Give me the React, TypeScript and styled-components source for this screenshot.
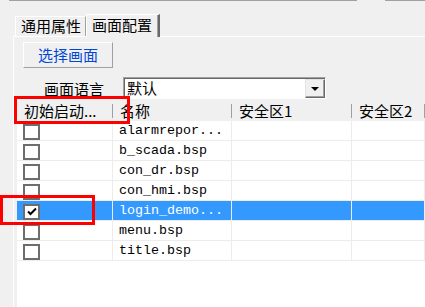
import styled, { createGlobalStyle } from "styled-components";

const GlobalStyle = createGlobalStyle`
  html, body {
    margin: 0;
    padding: 0;
    background: #f0f0f0;
  }
`;

const CJK = `"Noto Sans CJK SC", "Noto Sans", sans-serif`;
const MONO = `"Liberation Mono", "DejaVu Sans Mono", monospace`;

type Row = { name: string; checked?: boolean; selected?: boolean };

const rows: Row[] = [
  { name: "alarmrepor..." },
  { name: "b_scada.bsp" },
  { name: "con_dr.bsp" },
  { name: "con_hmi.bsp" },
  { name: "login_demo...", checked: true, selected: true },
  { name: "menu.bsp" },
  { name: "title.bsp" },
];

const Check = () => (
  <svg width="10" height="9" viewBox="0 0 10 9">
    <path d="M1 4.5 L3.5 7 L9 1.5" stroke="#000" strokeWidth="2" fill="none" />
  </svg>
);

const App = () => {
  return (
    <S.Page>
      <GlobalStyle />
      <S.TopEdge>
        <S.EdgeSegment $width={348} />
        <S.EdgeGap />
        <S.EdgeSegment />
      </S.TopEdge>

      <S.TabStrip>
        <S.Tab>通用属性</S.Tab>
        <S.Tab $active>画面配置</S.Tab>
      </S.TabStrip>

      <S.Panel>
        <S.Button>选择画面</S.Button>

        <S.LangRow>
          <S.Label>画面语言</S.Label>
          <S.Combo>
            <S.ComboText>默认</S.ComboText>
            <S.ComboArrow>
              <S.Triangle />
            </S.ComboArrow>
          </S.Combo>
        </S.LangRow>

        <S.Table>
          <S.HeaderRow>
            <S.HeadCell $width={96}>初始启动...</S.HeadCell>
            <S.HeadCell $width={119}>名称</S.HeadCell>
            <S.HeadCell $width={120}>安全区1</S.HeadCell>
            <S.HeadCell>安全区2</S.HeadCell>
          </S.HeaderRow>

          {rows.map((row) => (
            <S.BodyRow key={row.name} $selected={row.selected}>
              <S.Cell $width={96}>
                <S.CheckBox>{row.checked && <Check />}</S.CheckBox>
              </S.Cell>
              <S.Cell $width={119}>
                <S.Name $selected={row.selected}>{row.name}</S.Name>
              </S.Cell>
              <S.Cell $width={120} />
              <S.Cell />
            </S.BodyRow>
          ))}
        </S.Table>

        <S.Marker $top={96} $left={14} $width={116} $height={28} />
        <S.Marker $top={195} $left={0} $width={95} $height={30} />
      </S.Panel>
    </S.Page>
  );
};

export default App;

const S = {
  Page: styled.div`
    position: relative;
    width: 425px;
    height: 307px;
    overflow: hidden;
    background: #f0f0f0;
    display: flex;
    flex-direction: column;
    font-family: ${CJK};
    font-size: 15px;
    color: #000;
  `,

  TopEdge: styled.div`
    display: flex;
    height: 1px;
    margin-left: 9px;
  `,

  EdgeSegment: styled.div<{ $width?: number }>`
    background: #a0a0a0;
    ${({ $width }) => ($width ? `width: ${$width}px;` : "flex: 1;")}
  `,

  EdgeGap: styled.div`
    width: 28px;
  `,

  TabStrip: styled.div`
    display: flex;
    align-items: flex-end;
    height: 35px;
    padding-left: 15px;
    position: relative;
    z-index: 1;
  `,

  Tab: styled.div<{ $active?: boolean }>`
    box-sizing: border-box;
    height: ${({ $active }) => ($active ? 23 : 20)}px;
    margin-bottom: ${({ $active }) => ($active ? -1 : 0)}px;
    padding: ${({ $active }) => ($active ? "0 6px 0 5px" : "0 4px 0 5px")};
    line-height: ${({ $active }) => ($active ? 19 : 18)}px;
    background: #f0f0f0;
    border-top: 1px solid #fff;
    border-left: 1px solid #fff;
    border-right: ${({ $active }) => ($active ? "2px solid #696969" : "1px solid #a0a0a0")};
    box-shadow: ${({ $active }) => ($active ? "inset -1px 0 0 #a0a0a0" : "none")};
    white-space: nowrap;
  `,

  Panel: styled.div`
    position: relative;
    flex: 1;
    margin-left: 13px;
    border-top: 1px solid #fff;
    border-left: 1px solid #fff;
    display: flex;
    flex-direction: column;
  `,

  Button: styled.div`
    box-sizing: border-box;
    width: 90px;
    height: 26px;
    margin: 5px 0 0 9px;
    border-top: 1px solid #fff;
    border-left: 1px solid #fff;
    border-right: 1px solid #a0a0a0;
    border-bottom: 1px solid #a0a0a0;
    color: #0047d6;
    text-align: center;
    line-height: 23px;
  `,

  LangRow: styled.div`
    display: flex;
    align-items: center;
    margin-top: 9px;
    height: 22px;
  `,

  Label: styled.div`
    width: 79px;
    padding-left: 30px;
    line-height: 22px;
    margin-top: 2px;
  `,

  Combo: styled.div`
    box-sizing: border-box;
    display: flex;
    width: 203px;
    height: 22px;
    background: #fff;
    border-top: 1px solid #a0a0a0;
    border-left: 1px solid #a0a0a0;
    border-right: 1px solid #fff;
    border-bottom: 1px solid #fff;
    box-shadow: inset 1px 1px 0 #696969;
  `,

  ComboText: styled.div`
    flex: 1;
    padding-left: 3px;
    line-height: 19px;
  `,

  ComboArrow: styled.div`
    box-sizing: border-box;
    width: 20px;
    height: 19px;
    margin-top: 1px;
    background: #f0f0f0;
    border-top: 1px solid #e3e3e3;
    border-left: 1px solid #e3e3e3;
    border-right: 1px solid #696969;
    border-bottom: 1px solid #696969;
    box-shadow: inset -1px -1px 0 #a0a0a0;
    display: flex;
    align-items: center;
    justify-content: center;
  `,

  Triangle: styled.div`
    width: 0;
    height: 0;
    border-left: 4px solid transparent;
    border-right: 4px solid transparent;
    border-top: 4px solid #000;
  `,

  Table: styled.div`
    flex: 1;
    margin: 1px 0 0 3px;
    background: #fff;
    display: flex;
    flex-direction: column;
  `,

  HeaderRow: styled.div`
    display: flex;
    height: 21px;
    background: #f0f0f0;
  `,

  HeadCell: styled.div<{ $width?: number }>`
    box-sizing: border-box;
    ${({ $width }) => ($width ? `width: ${$width}px;` : "flex: 1;")}
    padding-left: 7px;
    line-height: 21px;
    white-space: nowrap;
    overflow: hidden;
    background: linear-gradient(#a0a0a0, #a0a0a0) right 4px / 1px 14px no-repeat;
  `,

  BodyRow: styled.div<{ $selected?: boolean }>`
    display: flex;
    height: 20px;
    box-sizing: border-box;
    border-bottom: 1px solid #ececec;
    background: ${({ $selected }) => ($selected ? "#3399ff" : "#fff")};
  `,

  Cell: styled.div<{ $width?: number }>`
    box-sizing: border-box;
    ${({ $width }) => ($width ? `width: ${$width}px;` : "flex: 1;")}
    border-right: 1px solid #ececec;
    display: flex;
    align-items: center;
    padding-left: 6px;
  `,

  CheckBox: styled.div`
    box-sizing: border-box;
    width: 17px;
    height: 16px;
    margin-top: 2px;
    border: 2px solid #6d6d6d;
    background: #fff;
    display: flex;
    align-items: center;
    justify-content: center;
  `,

  Name: styled.span<{ $selected?: boolean }>`
    font-family: ${MONO};
    font-size: 13.33px;
    color: ${({ $selected }) => ($selected ? "#fff" : "#000")};
    white-space: nowrap;
  `,

  Marker: styled.div<{ $top: number; $left: number; $width: number; $height: number }>`
    position: absolute;
    box-sizing: border-box;
    top: ${({ $top }) => $top - 37}px;
    left: ${({ $left }) => $left - 14}px;
    width: ${({ $width }) => $width}px;
    height: ${({ $height }) => $height}px;
    border: 3px solid #ff0000;
    pointer-events: none;
  `,
};
